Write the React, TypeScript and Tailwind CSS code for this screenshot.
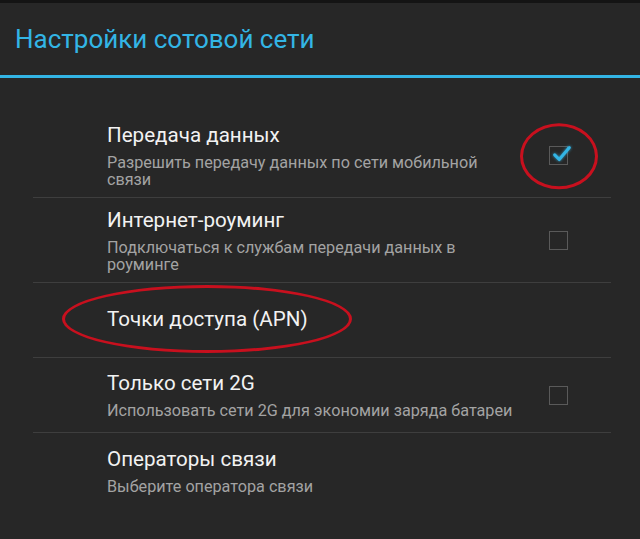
import React from "react";

type Item = {
  title: string;
  summary?: string;
  checkbox?: "on" | "off";
  tall?: boolean;
  circleBox?: boolean;
  circleTitle?: boolean;
};

const items: Item[] = [
  {
    title: "Передача данных",
    summary: "Разрешить передачу данных по сети мобильной связи",
    checkbox: "on",
    tall: true,
    circleBox: true,
  },
  {
    title: "Интернет-роуминг",
    summary: "Подключаться к службам передачи данных в роуминге",
    checkbox: "off",
    tall: true,
  },
  { title: "Точки доступа (APN)", circleTitle: true },
  {
    title: "Только сети 2G",
    summary: "Использовать сети 2G для экономии заряда батареи",
    checkbox: "off",
  },
  { title: "Операторы связи", summary: "Выберите оператора связи" },
];

// holo style checkbox
function CheckBox({ checked, circled }: { checked: boolean; circled?: boolean }) {
  return (
    <div className="relative w-[19px] h-[19px] border-[1.5px] border-[#5a5a5a] shrink-0">
      {checked && (
        <svg
          viewBox="0 0 24 24"
          className="absolute left-[1px] top-[-4px] w-[22px] h-[22px] overflow-visible"
        >
          <path
            d="M4 13 L9 18 L20 5"
            fill="none"
            stroke="#33b5e5"
            strokeWidth="3.4"
            strokeLinecap="round"
            strokeLinejoin="round"
            style={{ filter: "drop-shadow(0 0 2px rgba(51,181,229,0.8))" }}
          />
        </svg>
      )}
      {circled && (
        <div className="absolute left-1/2 top-1/2 -translate-x-1/2 -translate-y-[48%] w-[78px] h-[66px] rounded-[50%] border-[3px] border-[#c8101e]" />
      )}
    </div>
  );
}

function Row({ item, last }: { item: Item; last: boolean }) {
  return (
    <div
      className={`flex items-center pl-[74px] pr-[43px] ${
        item.tall ? "h-[85px]" : "h-[75px]"
      } ${last ? "" : "border-b border-[#3e3e3e]"}`}
    >
      <div className="flex-1 min-w-0">
        <div className="relative inline-block text-[20.6px] leading-[24px] text-[#f2f2f2]">
          {item.title}
          {item.circleTitle && (
            <div className="absolute left-1/2 top-1/2 -translate-x-1/2 -translate-y-1/2 w-[290px] h-[68px] rounded-[50%] border-[3px] border-[#c8101e]" />
          )}
        </div>
        {item.summary && (
          <div className="mt-[5px] text-[16.2px] leading-[17px] text-[#a3a3a3] max-w-[412px]">
            {item.summary}
          </div>
        )}
      </div>
      {item.checkbox && <CheckBox checked={item.checkbox === "on"} circled={item.circleBox} />}
    </div>
  );
}

export default function App() {
  return (
    <div
      className="w-[640px] h-[539px] overflow-hidden bg-[#272727]"
      style={{ fontFamily: "Roboto, 'Noto Sans', sans-serif" }}
    >
      <div className="h-[3px] bg-[#141414]" />
      <div className="h-[72px] flex items-center pl-[15px] text-[26px] text-[#33b5e5]">
        Настройки сотовой сети
      </div>
      <div className="h-[3px] bg-[#33b5e5]" />
      <div className="pt-[35px] ml-[33px] w-[578px]">
        {items.map((it, i) => (
          <Row key={it.title} item={it} last={i === items.length - 1} />
        ))}
      </div>
    </div>
  );
}
